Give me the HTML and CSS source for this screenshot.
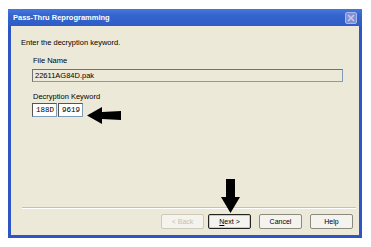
FILE: index.html
```html
<!DOCTYPE html>
<html lang="en">
<head>
    <meta charset="UTF-8">
    <title>Pass-Thru Reprogramming</title>
    <link rel="stylesheet" href="styles.css">
</head>
<body>
<div class="window">
    <div class="titlebar">
        <span class="title">Pass-Thru Reprogramming</span>
        <span class="close-btn">
            <svg width="8" height="8" viewBox="0 0 8 8"><path d="M1 1 L7 7 M7 1 L1 7" stroke="#c9c6e8" stroke-width="1.6"/></svg>
        </span>
    </div>
    <div class="panel">
        <p class="prompt">Enter the decryption keyword.</p>
        <div class="fields">
            <label class="field-label">File Name</label>
            <div class="textbox readonly">22611AG84D.pak</div>
            <label class="field-label">Decryption Keyword</label>
            <div class="key-row">
                <div class="keybox">188D</div>
                <div class="keybox">9619</div>
                <!-- 指示箭头 -->
                <svg class="arrow-left" width="34" height="17" viewBox="0 0 34 17">
                    <polygon points="0,8.5 15,0 15,5 34,4 34,13 15,12 15,17" fill="#000"/>
                </svg>
            </div>
        </div>
        <div class="spacer"></div>
        <div class="separator"></div>
        <div class="buttons">
            <button class="btn back" disabled>&lt; Back</button>
            <div class="btn-wrap">
                <svg class="arrow-down" width="19" height="34" viewBox="0 0 19 34">
                    <polygon points="5,0 14,0 14,18 19,18 9.5,34 0,18 5,18" fill="#000"/>
                </svg>
                <button class="btn default"><u>N</u>ext &gt;</button>
            </div>
            <button class="btn">Cancel</button>
            <button class="btn">Help</button>
        </div>
    </div>
</div>
</body>
</html>
```

FILE: styles.css
```css
body {
    margin: 0;
    background-color: #fff;
    font-family: "Liberation Sans", Arial, sans-serif;
    font-size: 7.5px;
    color: #000;
}

.window {
    margin: 9px 0 0 8px;
    width: 354px;
    height: 229px;
    box-sizing: border-box;
    border: 3px solid #2d55c4;
    border-top: none;
    background-color: #ece9d8;
    display: flex;
    flex-direction: column;
}

.titlebar {
    height: 17px;
    margin: 0 -3px;
    padding: 0 5px 0 5px;
    background: linear-gradient(#4477dc, #3564cc 40%, #2f5cc6);
    display: flex;
    align-items: center;
    justify-content: space-between;
}

.title {
    color: #fff;
    font-weight: bold;
    font-size: 7.5px;
}

.close-btn {
    width: 12px;
    height: 12px;
    box-sizing: border-box;
    border: 1px solid #a9b6e6;
    border-radius: 2px;
    background-color: #7f8fd8;
    display: flex;
    align-items: center;
    justify-content: center;
}

.panel {
    flex: 1;
    display: flex;
    flex-direction: column;
    padding: 0 6px 6px 7px;
}

.prompt {
    margin: 12px 0 0 3px;
    line-height: 10px;
}

.fields {
    display: flex;
    flex-direction: column;
    padding-left: 14px;
    margin-top: 8px;
}

.field-label {
    line-height: 10px;
    margin-left: 1px;
}

.textbox {
    margin-top: 3px;
    width: 311px;
    height: 13px;
    box-sizing: border-box;
    border: 1px solid #7f9db9;
    border-top-color: #717171;
    border-left-color: #717171;
    padding-left: 2px;
    line-height: 11px;
    background-color: #fff;
}

.textbox.readonly {
    background-color: #ece9d8;
    margin-bottom: 10px;
}

.key-row {
    margin-top: 1px;
    display: flex;
    align-items: flex-start;
}

.keybox {
    width: 25px;
    height: 14px;
    box-sizing: border-box;
    margin-right: 1px;
    border: 1px solid #7f9db9;
    border-top-color: #555;
    border-left-color: #555;
    background-color: #fff;
    font-family: "Liberation Mono", "DejaVu Sans Mono", monospace;
    font-size: 7.5px;
    line-height: 12px;
    padding-left: 3px;
}

.arrow-left {
    margin: 4px 0 0 3px;
}

.spacer {
    flex: 1;
}

.separator {
    margin: 0 0 0 4px;
    height: 1px;
    width: 334px;
    background-color: #c6c2b0;
    border-bottom: 1px solid #fff;
}

.buttons {
    margin-top: 5px;
    display: flex;
    justify-content: flex-end;
    gap: 8px;
}

.btn-wrap {
    position: relative;
    display: flex;
}

.arrow-down {
    position: absolute;
    left: 13px;
    top: -35px;
}

.btn {
    width: 43px;
    height: 15px;
    box-sizing: border-box;
    margin: 0;
    padding: 0;
    font-family: inherit;
    font-size: 7px;
    color: #000;
    background-color: #f4f3ee;
    border: 1px solid #8a8a80;
    border-radius: 2px;
}

.btn.back {
    margin-right: -4px;
}

.btn:disabled {
    color: #c3c1b4;
    border-color: #cdcabb;
}

.btn.default {
    border: 1px solid #222;
    box-shadow: inset 0 0 0 1px #b9cdf0;
}
```
